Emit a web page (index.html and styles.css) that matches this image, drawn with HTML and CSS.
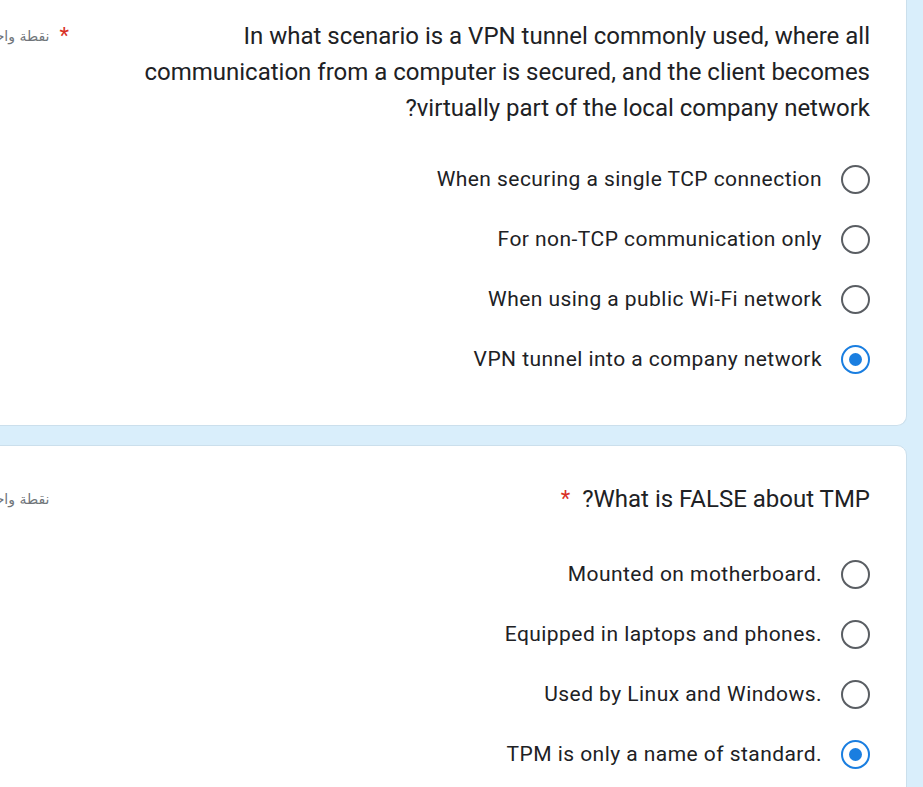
FILE: index.html
```html
<!DOCTYPE html>
<html lang="en">
<head>
<meta charset="utf-8">
<link rel="stylesheet" href="styles.css">
</head>
<body>
<main class="page">
  <section class="card card-first">
    <div class="head">
      <div class="qtext">In what scenario is a VPN tunnel commonly used, where all communication from a computer is secured, and the client becomes virtually part of the local company network?</div>
      <span class="star">*</span>
      <span class="points">نقطة واحدة</span>
    </div>
    <div class="options options-first">
      <label class="opt"><span class="radio"></span><span class="otext">When securing a single TCP connection</span></label>
      <label class="opt"><span class="radio"></span><span class="otext">For non-TCP communication only</span></label>
      <label class="opt"><span class="radio"></span><span class="otext">When using a public Wi-Fi network</span></label>
      <label class="opt"><span class="radio checked"></span><span class="otext">VPN tunnel into a company network</span></label>
    </div>
  </section>
  <section class="card card-second">
    <div class="head">
      <div class="qtext">What is FALSE about TMP?</div>
      <span class="star">*</span>
      <span class="points">نقطة واحدة</span>
    </div>
    <div class="options options-second">
      <label class="opt"><span class="radio"></span><span class="otext">Mounted on motherboard.</span></label>
      <label class="opt"><span class="radio"></span><span class="otext">Equipped in laptops and phones.</span></label>
      <label class="opt"><span class="radio"></span><span class="otext">Used by Linux and Windows.</span></label>
      <label class="opt"><span class="radio checked"></span><span class="otext">TPM is only a name of standard.</span></label>
    </div>
  </section>
</main>
</body>
</html>
```
FILE: styles.css
```css
html, body {
  margin: 0;
  padding: 0;
  background: #d9eefb;
  overflow: hidden;
  height: 787px;
}
body {
  font-family: Roboto, "Noto Sans", "DejaVu Sans", sans-serif;
  color: #202124;
}
.page {
  width: 947px;
  margin-left: -40px;
  display: flex;
  flex-direction: column;
  gap: 19px;
}
.card {
  direction: rtl;
  background: #fff;
  border: 1px solid #cbdfec;
  border-radius: 10px;
  padding: 0 36px 0 20px;
}
.card-first {
  border-top: none;
  border-top-left-radius: 0;
  border-top-right-radius: 0;
  padding-top: 18px;
  padding-bottom: 36px;
}
.card-second {
  padding-top: 35px;
  padding-bottom: 40px;
}
.head {
  display: flex;
  align-items: flex-start;
}
.qtext {
  flex: 0 1 auto;
  font-size: 24px;
  line-height: 36px;
  text-align: right;
}
.star {
  color: #d93025;
  font-size: 22px;
  line-height: 36px;
  margin-right: 12px;
}
.card-first .star {
  margin-left: 10px;
}
.points {
  margin-right: auto;
  white-space: nowrap;
  font-family: "DejaVu Sans", sans-serif;
  font-size: 14px;
  line-height: 36px;
  color: #70757a;
}
.options {
  display: flex;
  flex-direction: column;
}
.options-first {
  margin-top: 23px;
}
.options-second {
  margin-top: 27px;
}
.opt {
  height: 60px;
  display: flex;
  align-items: center;
  gap: 19px;
}
.radio {
  box-sizing: border-box;
  width: 29px;
  height: 29px;
  border: 2.6px solid #5a5e63;
  border-radius: 50%;
  flex: none;
  display: flex;
  align-items: center;
  justify-content: center;
}
.radio.checked {
  border-color: #1a7ee0;
}
.radio.checked::after {
  content: "";
  width: 13px;
  height: 13px;
  border-radius: 50%;
  background: #1a7ee0;
}
.otext {
  direction: ltr;
  font-size: 21px;
  letter-spacing: 0.45px;
}
```
